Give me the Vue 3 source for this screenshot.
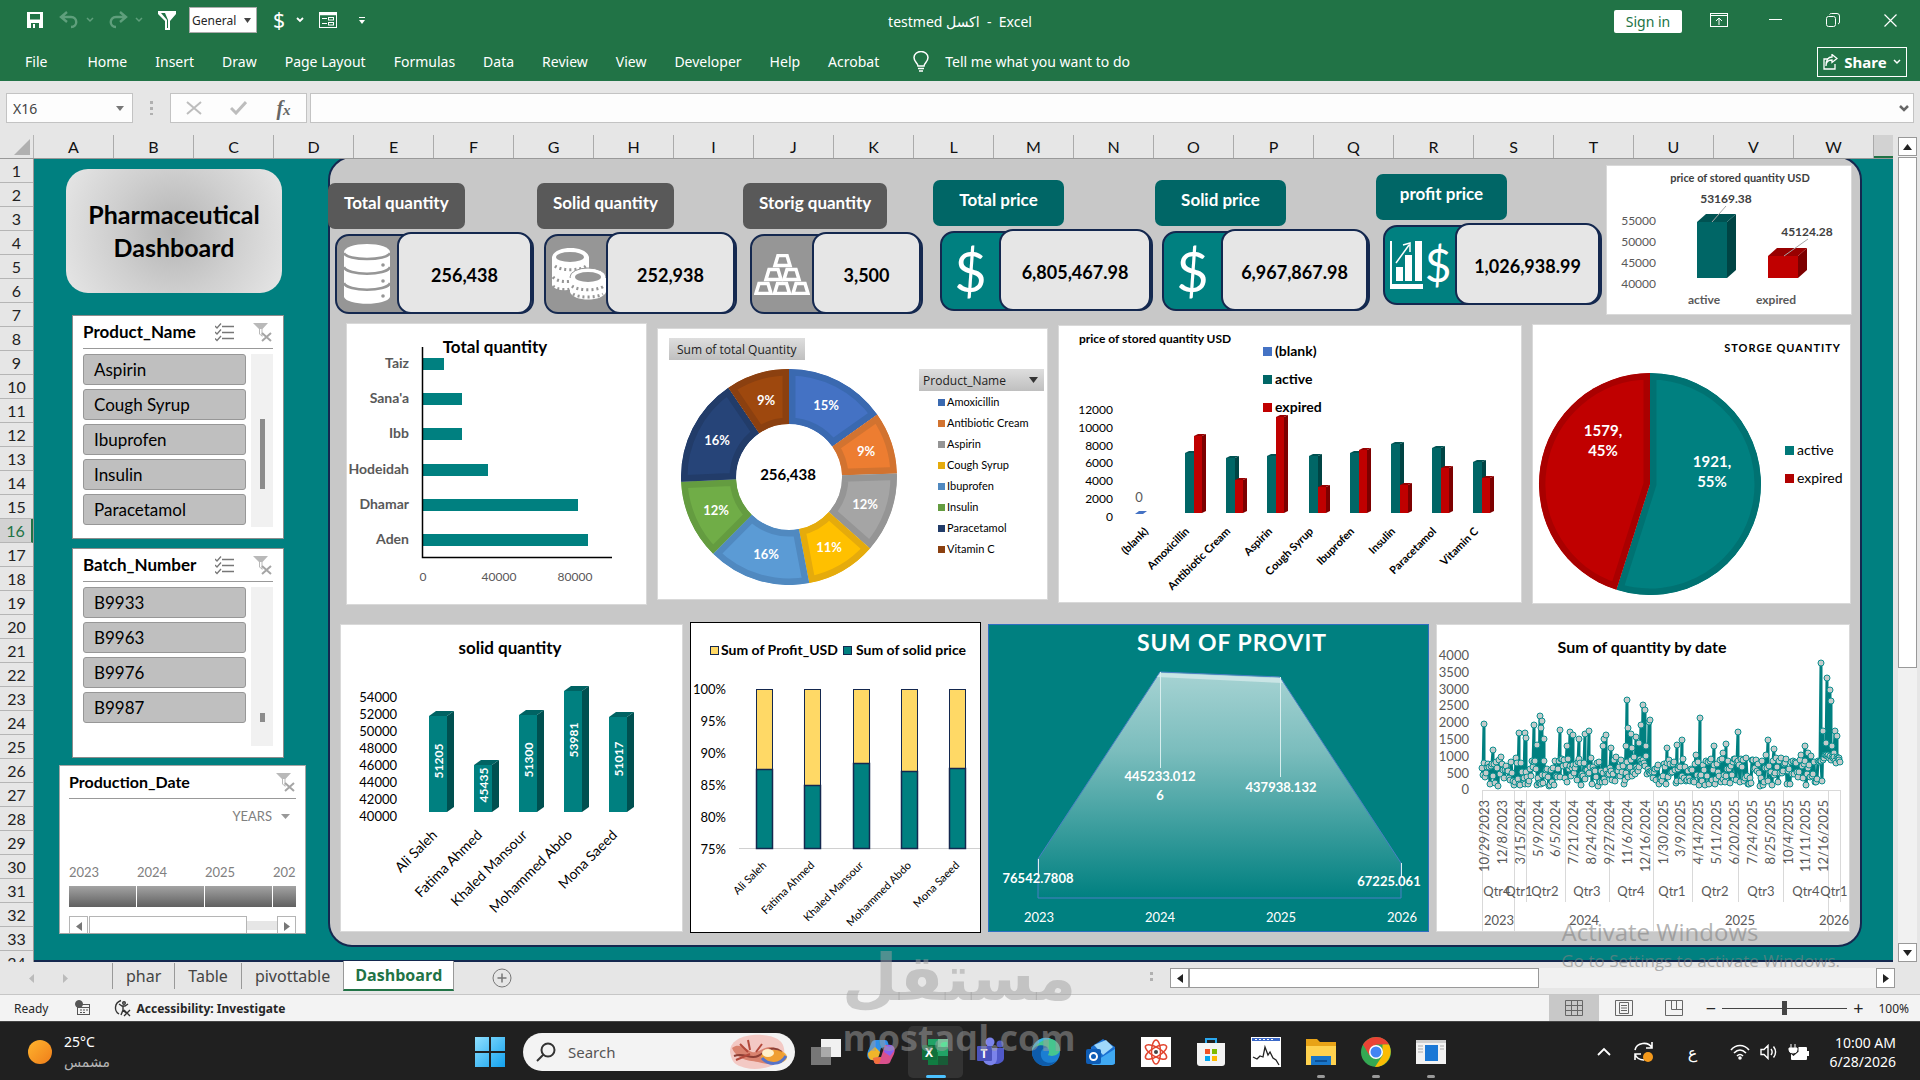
<script setup>
const ribbonTabs = ['Home', 'Insert', 'Draw', 'Page Layout', 'Formulas', 'Data', 'Review', 'View', 'Developer', 'Help', 'Acrobat']
const columns = 'ABCDEFGHIJKLMNOPQRSTUVW'.split('')
const sheets = ['phar', 'Table', 'pivottable', 'Dashboard']

const slicers = [
  { name: 'Product_Name', items: ['Aspirin', 'Cough Syrup', 'Ibuprofen', 'Insulin', 'Paracetamol'], cls: 'product' },
  { name: 'Batch_Number', items: ['B9933', 'B9963', 'B9976', 'B9987'], cls: 'batch' },
]

const kpis = [
  { label: 'Total quantity', value: '256,438', tone: 'gray', icon: 'database', slot: 209, box: 199 },
  { label: 'Solid quantity', value: '252,938', tone: 'gray', icon: 'coins', slot: 206, box: 193 },
  { label: 'Storig quantity', value: '3,500', tone: 'gray', icon: 'bars', slot: 190, box: 173 },
  { label: 'Total price', value: '6,805,467.98', tone: 'teal', icon: 'dollar', slot: 222, box: 213 },
  { label: 'Solid price', value: '6,967,867.98', tone: 'teal', icon: 'dollar', slot: 221, box: 208 },
  { label: 'profit price', value: '1,026,938.99', tone: 'teal high', icon: 'profit', slot: 230, box: 219 },
]

/* Faces of an upright 3-D column */
function column(x, top, base, w, dx, dy) {
  return {
    front: `${x},${top} ${x + w},${top} ${x + w},${base} ${x},${base}`,
    roof: `${x},${top} ${x + dx},${top - dy} ${x + w + dx},${top - dy} ${x + w},${top}`,
    side: `${x + w},${top} ${x + w + dx},${top - dy} ${x + w + dx},${base - dy} ${x + w},${base}`,
  }
}

const miniColumns = [
  { ...column(91, 57, 113, 30, 9, 8), tone: 'teal' },
  { ...column(162, 91, 113, 30, 9, 8), tone: 'red' },
]

const cities = [
  { name: 'Taiz', w: 22 },
  { name: "Sana'a", w: 40 },
  { name: 'Ibb', w: 40 },
  { name: 'Hodeidah', w: 66 },
  { name: 'Dhamar', w: 156 },
  { name: 'Aden', w: 166 },
]

function polar(cx, cy, r, pct) {
  const a = (pct / 100) * Math.PI * 2
  return `${(cx + r * Math.sin(a)).toFixed(1)} ${(cy - r * Math.cos(a)).toFixed(1)}`
}
function ring(cx, cy, r1, r0, from, to) {
  const big = to - from > 50 ? 1 : 0
  if (!r0) return `M${cx} ${cy}L${polar(cx, cy, r1, from)}A${r1} ${r1} 0 ${big} 1 ${polar(cx, cy, r1, to)}Z`
  return `M${polar(cx, cy, r1, from)}A${r1} ${r1} 0 ${big} 1 ${polar(cx, cy, r1, to)}L${polar(cx, cy, r0, to)}A${r0} ${r0} 0 ${big} 0 ${polar(cx, cy, r0, from)}Z`
}
const donut = [
  { name: 'Amoxicillin', pct: '15%', from: 0, to: 15.2, fill: '#4472c4', edge: '#3a69b0', x: 169, y: 82 },
  { name: 'Antibiotic Cream', pct: '9%', from: 15.2, to: 24.5, fill: '#ed7d31', edge: '#d27330', x: 209, y: 128 },
  { name: 'Aspirin', pct: '12%', from: 24.5, to: 36.5, fill: '#a5a5a5', edge: '#959595', x: 208, y: 181 },
  { name: 'Cough Syrup', pct: '11%', from: 36.5, to: 47, fill: '#ffc000', edge: '#e5ab0c', x: 172, y: 224 },
  { name: 'Ibuprofen', pct: '16%', from: 47, to: 62.4, fill: '#5b9bd5', edge: '#5089c0', x: 109, y: 231 },
  { name: 'Insulin', pct: '12%', from: 62.4, to: 74.3, fill: '#70ad47', edge: '#649c40', x: 59, y: 187 },
  { name: 'Paracetamol', pct: '16%', from: 74.3, to: 90.5, fill: '#264478', edge: '#223c69', x: 60, y: 117 },
  { name: 'Vitamin C', pct: '9%', from: 90.5, to: 100, fill: '#9e480e', edge: '#8b4010', x: 109, y: 77 },
].map((d) => ({ ...d, path: ring(132, 149, 108, 53, d.from, d.to) }))

const stored = [
  ['Amoxicillin', 128, 111], ['Antibiotic Cream', 133, 155], ['Aspirin', 131, 92], ['Cough Syrup', 131, 162],
  ['Ibuprofen', 128, 125], ['Insulin', 119, 160], ['Paracetamol', 123, 143], ['Vitamin C', 137, 153],
].map(([name, a, r], i) => {
  const x = 127 + Math.round(i * 41.2)
  return { name, x, active: column(x, a, 188, 9, 4, 2), expired: column(x + 9, r, 188, 8, 4, 2) }
})

const pie = [
  { fill: '#008080', edge: '#007272', path: ring(118, 160, 111, 0, 0, 54.9) },
  { fill: '#c00000', edge: '#a90000', path: ring(118, 160, 111, 0, 54.9, 100) },
]

const solid = [
  ['Ali Saleh', 51205, 92, 137], ['Fatima Ahmed', 45435, 141, 161], ['Khaled Mansour', 51300, 91, 136],
  ['Mohammed Abdo', 53981, 67, 116], ['Mona Saeed', 51017, 93, 135],
].map(([name, value, top, mid], i) => ({ name, value, mid, x: 89 + i * 45, ...column(89 + i * 45, top, 188, 18, 7, 5) }))

const stacked = [148, 164, 142, 150, 147].map((split, i) => ({ name: solid[i].name, split, x: 66 + Math.round(i * 48.3) }))

const dates = ['10/29/2023', '12/8/2023', '3/15/2024', '5/9/2024', '6/5/2024', '7/21/2024', '8/24/2024', '9/27/2024', '11/6/2024', '12/16/2024', '1/30/2025', '3/9/2025', '4/14/2025', '5/11/2025', '6/20/2025', '7/24/2025', '8/25/2025', '10/4/2025', '11/11/2025', '12/16/2025']
const quarters = [['Qtr4', 61], ['Qtr1', 83], ['Qtr2', 109], ['Qtr3', 151], ['Qtr4', 195], ['Qtr1', 236], ['Qtr2', 279], ['Qtr3', 325], ['Qtr4', 370], ['Qtr1', 398]]
const quarterLines = [46, 78, 90, 129, 173, 217, 256, 302, 347, 392, 404]
const yearLines = [46, 78, 217, 392]

/* Daily quantities: [x, quantity] for the high days, a steady spread between them */
const highs = [[48, 1970], [57, 1200], [83, 1700], [89, 1700], [90, 1550], [98, 1940], [101, 1340], [104, 2190], [105, 1830], [106, 2060], [108, 1500], [124, 1770], [131, 1300], [134, 1720], [137, 1620], [143, 1500], [149, 1670], [153, 1740], [167, 1320], [168, 1520], [170, 1640], [175, 1260], [190, 1300], [191, 2660], [192, 1830], [195, 1650], [196, 1240], [200, 1560], [203, 1400], [205, 1940], [207, 2510], [209, 2360], [210, 1300], [213, 2020], [214, 2090], [231, 1240], [241, 1350], [246, 1470], [264, 2150], [278, 1300], [287, 1110], [290, 1360], [302, 1710], [332, 1470], [338, 1220], [369, 1320], [372, 1090], [385, 3760], [387, 1740], [390, 1400], [391, 3310], [394, 2980], [395, 2630], [396, 1310], [398, 1110], [399, 1740], [401, 1590], [403, 940]]
const series = []
let seed = 11
let h = 0
for (let x = 46; x <= 404; x += 1) {
  if (h < highs.length && highs[h][0] <= x) {
    series.push(highs[h])
    h += 1
  }
  seed = (seed * 1103515245 + 12345) % 2147483648
  const r = seed / 2147483648
  const low = x > 386 ? 800 : x > 195 && x < 214 ? 400 : 120
  series.push([x, Math.round(low + r * (1080 - low) * (x % 5 === 0 ? 1 : 0.85))])
}
const points = series.map(([x, v]) => [x, Math.round(166 - v * 0.0337)])
const trend = points.map((p) => p.join(',')).join(' ')
</script>

<template>
  <div class="window">
    <header class="head">
      <div class="titlebar">
        <div class="qat">
          <button class="ico" aria-label="Save"><svg width="18" height="18" viewBox="0 0 18 18"><path d="M1 1h16v16H1z" fill="#fff" /><path d="M4 3h10v6H4zM5 12h8v5H5z" fill="#217346" /><path d="M7 13h2v4H7zM3.5 8.500h11v1.500h-11z" fill="#fff" /></svg></button>
          <div class="pair dim">
            <button class="ico" aria-label="Undo"><svg width="20" height="18" viewBox="0 0 20 18"><path d="M8 1L2 6l6 5M3 6h9c7 0 7 10 0 10" fill="none" stroke="currentColor" stroke-width="2.400" /></svg></button>
            <svg class="chev" width="12" height="8" viewBox="0 0 12 8"><path d="M3 2l3 3 3-3" fill="none" stroke="currentColor" stroke-width="1.500" /></svg>
          </div>
          <div class="pair dim">
            <button class="ico" aria-label="Redo"><svg width="20" height="18" viewBox="0 0 20 18"><path d="M12 1l6 5-6 5M17 6H8c-7 0-7 10 0 10" fill="none" stroke="currentColor" stroke-width="2.400" /></svg></button>
            <svg class="chev" width="12" height="8" viewBox="0 0 12 8"><path d="M3 2l3 3 3-3" fill="none" stroke="currentColor" stroke-width="1.500" /></svg>
          </div>
          <button class="ico" aria-label="Filter"><svg width="20" height="20" viewBox="0 0 20 20"><path d="M1 1h18v3l-6 7v9H8v-9L1 4z" fill="#fff" /><path d="M4 3h4l3 7v8h-1v-8z" fill="#217346" /></svg></button>
          <div class="format">
            <select aria-label="Number format"><option>General</option></select>
            <svg width="7" height="5" viewBox="0 0 7 5"><path d="M0 0h7L3.500 5z" fill="#444" /></svg>
          </div>
          <div class="pair">
            <button class="ico money" aria-label="Accounting format">$</button>
            <svg class="chev" width="12" height="8" viewBox="0 0 12 8"><path d="M3 2l3 3 3-3" fill="none" stroke="#fff" stroke-width="1.800" /></svg>
          </div>
          <button class="ico" aria-label="Form"><svg width="18" height="18" viewBox="0 0 18 18" fill="none" stroke="#fff"><rect x=".5" y="1.500" width="17" height="15" /><path d="M1 3h16" stroke-width="2.500" /><path d="M3 7.500h5M3 12.500h5" /><rect x="9.500" y="6.500" width="5" height="2.500" /><rect x="9.500" y="11.500" width="5" height="2.500" /></svg></button>
          <button class="ico" aria-label="Customize"><svg width="6" height="7" viewBox="0 0 6 7" fill="#fff"><path d="M0 0h6v1H0zM0 3h6L3 7z" /></svg></button>
        </div>
        <h1 class="doc">testmed اكسل&nbsp; - &nbsp;Excel</h1>
        <div class="winctl">
          <button class="signin">Sign in</button>
          <button class="wbtn" aria-label="Ribbon display"><svg width="18" height="14" viewBox="0 0 18 14" fill="none" stroke="#fff"><rect x=".5" y=".5" width="17" height="13" /><path d="M1 2.500h16M9 12V5M6 8l3-3 3 3" /></svg></button>
          <button class="wbtn" aria-label="Minimize"><svg width="13" height="14" viewBox="0 0 13 14"><path d="M0 6.500h13" stroke="#fff" /></svg></button>
          <button class="wbtn" aria-label="Restore"><svg width="14" height="14" viewBox="0 0 14 14" fill="none" stroke="#fff"><rect x=".5" y="3.500" width="9" height="10" rx="2" /><path d="M3.500 1.500q.5-1 2-1H11q2.500 0 2.500 2.500v6q0 1.500-1.500 2" /></svg></button>
          <button class="wbtn" aria-label="Close"><svg width="13" height="13" viewBox="0 0 13 13"><path d="M.5.500l12 12m0-12l-12 12" stroke="#fff" stroke-width="1.200" /></svg></button>
        </div>
      </div>
      <nav class="ribbon">
        <button class="rtab file">File</button>
        <button v-for="t in ribbonTabs" :key="t" class="rtab">{{ t }}</button>
        <button class="tell">
          <svg width="16" height="21" viewBox="0 0 16 21" fill="none" stroke="#fff" stroke-width="1.500"><path d="M5 15c0-3-4-4-4-8.500a7 6 0 0 1 14 0C15 11 11 12 11 15zM5 17.500h6M6 20h4" /></svg>
          Tell me what you want to do
        </button>
        <button class="share">
          <svg width="15" height="16" viewBox="0 0 15 16" fill="none" stroke="#fff" stroke-width="1.300"><path d="M5 5H1v10h11V10" /><path d="M3 12c0-5 3-6 6-6V8.500l5-4-5-4V3C5 3 3 7 3 12z" /></svg>
          Share
          <svg width="8" height="6" viewBox="0 0 8 6"><path d="M1 1l3 3 3-3" fill="none" stroke="#fff" stroke-width="1.500" /></svg>
        </button>
      </nav>
    </header>

    <div class="formula">
      <div class="namebox">
        <input value="X16" aria-label="Name box" />
        <svg width="8" height="5" viewBox="0 0 8 5"><path d="M0 0h8L4 5z" fill="#777" /></svg>
      </div>
      <span class="grip"></span>
      <div class="fxbox">
        <button aria-label="Cancel"><svg width="16" height="14" viewBox="0 0 16 14"><path d="M1 1l14 12M15 1L1 13" stroke="#bdbdbd" stroke-width="2" /></svg></button>
        <button aria-label="Enter"><svg width="17" height="14" viewBox="0 0 17 14"><path d="M1 7l5 5L16 1" fill="none" stroke="#bdbdbd" stroke-width="3" /></svg></button>
        <button class="fx" aria-label="Insert function">f<small>x</small></button>
      </div>
      <div class="fbar">
        <input value="" aria-label="Formula bar" />
        <svg width="10" height="7" viewBox="0 0 10 7"><path d="M1 1l4 4 4-4" fill="none" stroke="#666" stroke-width="2.500" /></svg>
      </div>
    </div>

    <div class="book">
      <div class="grid">
        <div class="cols">
          <div class="corner"><svg width="16" height="16" viewBox="0 0 16 16"><path d="M16 0v16H0z" fill="#b0b0b0" /></svg></div>
          <div v-for="c in columns" :key="c" class="col">{{ c }}</div>
          <div class="col active"></div>
        </div>
        <div class="sheet">
          <div class="rows">
            <div v-for="n in 34" :key="n" class="row" :class="{ active: n === 16 }">{{ n }}</div>
          </div>
          <main class="dash">
            <aside class="side">
              <h2 class="brand">Pharmaceutical<br />Dashboard</h2>
              <section v-for="s in slicers" :key="s.name" class="slicer" :class="s.cls">
                <header class="shead">
                  <h3>{{ s.name }}</h3>
                  <svg width="19" height="19" viewBox="0 0 19 19" fill="none" stroke="#777" stroke-width="1.300"><path d="M7 3.500h12M7 9.500h12M7 15.500h12M0 3l2 2 4-4.500M0 9l2 2 4-4.500M0 15.500l2 2L6 13" /></svg>
                  <svg width="19" height="19" viewBox="0 0 19 19"><path d="M0 0h15L9.500 6v8L6 11V6z" fill="#b9b9b9" /><path d="M7 6h1.500v6L7 11z" fill="#fff" /><path d="M9 10l9 8M18 10l-9 8" stroke="#a5a5a5" stroke-width="2" /></svg>
                </header>
                <div class="sbody">
                  <div class="items"><button v-for="i in s.items" :key="i">{{ i }}</button></div>
                  <div class="track"><span class="thumb"></span></div>
                </div>
              </section>
              <section class="timeline">
                <header class="shead">
                  <h3>Production_Date</h3>
                  <svg width="19" height="19" viewBox="0 0 19 19"><path d="M0 0h15L9.500 6v8L6 11V6z" fill="#b9b9b9" /><path d="M7 6h1.500v6L7 11z" fill="#fff" /><path d="M9 10l9 8M18 10l-9 8" stroke="#a5a5a5" stroke-width="2" /></svg>
                </header>
                <button class="level">YEARS <svg width="9" height="5" viewBox="0 0 9 5"><path d="M0 0h9L4.500 5z" fill="#999" /></svg></button>
                <div class="years">
                  <span>2023</span><span>2024</span><span>2025</span><span class="cut">2026</span>
                </div>
                <div class="blocks"><i></i><i></i><i></i><i class="cut"></i></div>
                <div class="tscroll">
                  <button aria-label="Earlier"><svg width="6" height="9" viewBox="0 0 6 9"><path d="M6 0v9L0 4.500z" fill="#777" /></svg></button>
                  <span></span><em></em>
                  <button aria-label="Later"><svg width="6" height="9" viewBox="0 0 6 9"><path d="M0 0v9l6-4.500z" fill="#777" /></svg></button>
                </div>
              </section>
            </aside>

            <div class="panel">
              <div class="line top">
                <section v-for="k in kpis" :key="k.label" class="kpi" :class="k.tone" :style="{ flexBasis: k.slot + 'px' }">
                  <h3>{{ k.label }}</h3>
                  <div class="kbox" :style="{ maxWidth: k.box + 'px' }">
                    <div class="kicon" :class="k.icon">
                      <svg v-if="k.icon === 'database'" width="46" height="60" viewBox="0 0 46 60">
                        <path d="M0 8v45c3 9 43 9 46 0V8z" fill="#fff" /><ellipse cx="23" cy="8" rx="23" ry="8" fill="#fff" />
                        <path d="M0 9c3 8 43 8 46 0M0 23c3 9 43 9 46 0M0 39c3 9 43 9 46 0" fill="none" stroke="#969696" stroke-width="2.500" />
                        <g fill="#969696"><circle cx="39" cy="21" r="1.800" /><circle cx="39" cy="37" r="1.800" /><circle cx="39" cy="52" r="1.800" /></g>
                      </svg>
                      <svg v-else-if="k.icon === 'coins'" width="54" height="52" viewBox="0 0 54 52">
                        <path d="M0 9v28c2 6 16 6 21 4h16V9C34-3 3-3 0 9z" fill="#fff" />
                        <ellipse cx="18" cy="9" rx="14" ry="5" fill="#969696" />
                        <path d="M3 18c6 5 25 5 31 0M1 29c4 5 14 5 19 4M1 38c4 4 12 4 17 3" fill="none" stroke="#969696" stroke-width="3" stroke-dasharray="2 3" />
                        <ellipse cx="36" cy="29" rx="18" ry="9" fill="#fff" stroke="#969696" stroke-width="1" />
                        <path d="M18 30v14c3 10 33 10 36 0V30z" fill="#fff" />
                        <ellipse cx="36" cy="29" rx="13" ry="5" fill="#969696" />
                        <path d="M20 38c6 5 26 5 32 0M21 46c6 4 24 4 30 0" fill="none" stroke="#969696" stroke-width="3" stroke-dasharray="2 3" />
                      </svg>
                      <svg v-else-if="k.icon === 'bars'" width="56" height="41" viewBox="0 0 56 41">
                        <path v-for="p in ['20 0', '11 14', '29 14', '1 28', '19.500 28', '38 28']" :key="p" :transform="`translate(${p})`" d="M4 1.500h9l3 10H1z" fill="#969696" stroke="#fff" stroke-width="3.500" />
                      </svg>
                      <template v-else-if="k.icon === 'dollar'">$</template>
                      <template v-else>
                        <svg width="34" height="48" viewBox="0 0 34 48"><path d="M1 0h2v43h31v5H1zM7 26h7v14H7zM16 14h7v26h-7zM26 0h7v40h-7z" fill="#fff" /><path d="M7 22l13-18M14 4l7-2v9" fill="none" stroke="#fff" stroke-width="1.500" /></svg>$
                      </template>
                    </div>
                    <div class="kval">{{ k.value }}</div>
                  </div>
                </section>

                <section class="card mini">
                  <svg viewBox="0 0 246 150" class="chart">
                    <text x="134" y="17" class="t11 b mid g4">price of stored quantity USD</text>
                    <text v-for="(v, i) in [55000, 50000, 45000, 40000]" :key="v" x="50" :y="60 + i * 21" class="t12 end g5">{{ v }}</text>
                    <g v-for="c in miniColumns" :key="c.tone" :class="c.tone"><polygon :points="c.side" class="side3" /><polygon :points="c.roof" class="roof3" /><polygon :points="c.front" class="front3" /></g>
                    <path d="M120 41L106 57M202 74L178 91" stroke="#a6a6a6" fill="none" />
                    <text x="120" y="38" class="t12 b mid g4">53169.38</text>
                    <text x="201" y="71" class="t12 b mid g4">45124.28</text>
                    <text x="98" y="139" class="t12 b mid g5">active</text>
                    <text x="170" y="139" class="t12 b mid g5">expired</text>
                  </svg>
                </section>
              </div>

              <div class="line middle">
                <section class="card city">
                  <svg viewBox="0 0 301 282" class="chart">
                    <rect v-for="(c, i) in cities" :key="c.name" x="76" :y="35 + Math.round(i * 35.2)" :width="c.w" height="12" fill="#008080" />
                    <path d="M76.500 24V234.500H266" fill="none" stroke="#000" stroke-width="1.500" />
                    <text v-for="(c, i) in cities" :key="c.name" x="63" :y="45 + Math.round(i * 35.2)" class="t14 b end g5">{{ c.name }}</text>
                    <text x="149" y="30" class="t17 b mid">Total quantity</text>
                    <text v-for="(v, i) in [0, 40000, 80000]" :key="v" :x="77 + i * 76" y="258" class="t12 mid g5">{{ v }}</text>
                  </svg>
                </section>

                <section class="card share-card">
                  <svg viewBox="0 0 391 272" class="chart">
                    <defs><clipPath v-for="(d, i) in donut" :id="'seg' + i" :key="i"><path :d="d.path" /></clipPath></defs>
                    <path v-for="(d, i) in donut" :key="d.name" :d="d.path" :fill="d.fill" :stroke="d.edge" stroke-width="13" :clip-path="`url(#seg${i})`" />
                    <text v-for="d in donut" :key="d.name" :x="d.x" :y="d.y" class="t13 b mid w">{{ d.pct }}</text>
                    <text x="131" y="152" class="t15 b mid">256,438</text>
                    <g v-for="(d, i) in donut" :key="d.name">
                      <rect x="281" :y="71 + i * 21" width="7" height="7" :fill="d.edge" />
                      <text x="290" :y="78 + i * 21" class="t11">{{ d.name }}</text>
                    </g>
                  </svg>
                  <button class="field sum">Sum of total Quantity</button>
                  <button class="field prod">Product_Name <svg width="9" height="6" viewBox="0 0 9 6"><path d="M0 0h9L4.500 6z" fill="#333" /></svg></button>
                </section>

                <section class="card stored">
                  <svg viewBox="0 0 464 278" class="chart">
                    <text x="21" y="18" class="t12 b">price of stored quantity USD</text>
                    <text v-for="(v, i) in [12000, 10000, 8000, 6000, 4000, 2000, 0]" :key="v" x="55" :y="89 + Math.round(i * 17.8)" class="t12 end">{{ v }}</text>
                    <path d="M77 189l4-3h8l-4 3z" fill="#4472c4" />
                    <text x="81" y="177" class="t13 mid g5">0</text>
                    <g v-for="s in stored" :key="s.name">
                      <g class="teal"><polygon :points="s.active.side" class="side3" /><polygon :points="s.active.roof" class="roof3" /><polygon :points="s.active.front" class="front3" /></g>
                      <g class="red"><polygon :points="s.expired.side" class="side3" /><polygon :points="s.expired.roof" class="roof3" /><polygon :points="s.expired.front" class="front3" /></g>
                    </g>
                    <g v-for="(l, i) in ['(blank)', 'active', 'expired']" :key="l">
                      <rect x="205" :y="22 + i * 28" width="9" height="9" :fill="['#4472c4', '#006666', '#c00000'][i]" />
                      <text x="217" :y="31 + i * 28" class="t14 b">{{ l }}</text>
                    </g>
                    <text v-for="(n, i) in ['(blank)', ...stored.map((s) => s.name)]" :key="n" :transform="`translate(${91 + Math.round(i * 41.2)} 207) rotate(-45)`" class="t11 b end">{{ n }}</text>
                  </svg>
                </section>

                <section class="card storge">
                  <svg viewBox="0 0 319 280" class="chart">
                    <text x="309" y="28" class="t11 b end track1">STORGE QUANTITY</text>
                    <defs><clipPath v-for="(p, i) in pie" :id="'pie' + i" :key="i"><path :d="p.path" /></clipPath></defs>
                    <path v-for="(p, i) in pie" :key="i" :d="p.path" :fill="p.fill" :stroke="p.edge" stroke-width="13" :clip-path="`url(#pie${i})`" />
                    <text x="71" y="112" class="t15 b mid w">1579,</text><text x="71" y="132" class="t15 b mid w">45%</text>
                    <text x="180" y="143" class="t15 b mid w">1921,</text><text x="180" y="163" class="t15 b mid w">55%</text>
                    <rect x="253" y="122" width="9" height="9" fill="#007878" /><text x="265" y="131" class="t14">active</text>
                    <rect x="253" y="150" width="9" height="9" fill="#b00000" /><text x="265" y="159" class="t14">expired</text>
                  </svg>
                </section>
              </div>

              <div class="line bottom">
                <section class="card solid">
                  <svg viewBox="0 0 343 308" class="chart">
                    <text x="170" y="30" class="t17 b mid">solid quantity</text>
                    <text v-for="(v, i) in [54000, 52000, 50000, 48000, 46000, 44000, 42000, 40000]" :key="v" x="57" :y="78 + i * 17" class="t13 end">{{ v }}</text>
                    <g v-for="s in solid" :key="s.name" class="tealb">
                      <polygon :points="s.side" class="side3" /><polygon :points="s.roof" class="roof3" /><polygon :points="s.front" class="front3" />
                      <text :transform="`translate(${s.x + 14} ${s.mid}) rotate(-90)`" class="t12 b mid w">{{ s.value }}</text>
                      <text :transform="`translate(${s.x + 9} 212) rotate(-45)`" class="t14 end">{{ s.name }}</text>
                    </g>
                  </svg>
                </section>

                <section class="card stack">
                  <svg viewBox="0 0 291 311" class="chart">
                    <rect x="20.500" y="24.500" width="8" height="8" fill="#ffd966" stroke="#14284f" /><text x="31" y="33" class="t14 b">Sum of Profit_USD</text>
                    <rect x="153.500" y="24.500" width="8" height="8" fill="#008080" stroke="#14284f" /><text x="166" y="33" class="t14 b">Sum of solid price</text>
                    <text v-for="(v, i) in [100, 95, 90, 85, 80, 75]" :key="v" x="36" :y="72 + i * 32" class="t13 end">{{ v }}%</text>
                    <path d="M49 226.500h241" stroke="#d0d0d0" />
                    <g v-for="b in stacked" :key="b.name">
                      <rect :x="b.x + 0.5" y="67.500" width="16" :height="b.split - 68" fill="#ffd966" stroke="#14284f" />
                      <rect :x="b.x + 0.5" :y="b.split - 0.5" width="16" :height="227 - b.split" fill="#008080" stroke="#14284f" stroke-width="1.500" />
                      <text :transform="`translate(${b.x + 11} 244) rotate(-45)`" class="t11 end">{{ b.name }}</text>
                    </g>
                  </svg>
                </section>

                <section class="card area">
                  <svg viewBox="0 0 441 308" class="chart">
                    <defs><linearGradient id="fade" x1="0" y1="0" x2="0" y2="1"><stop offset="0" stop-color="#a6d3d3" /><stop offset=".35" stop-color="#7bbdbd" /><stop offset="1" stop-color="#008080" /></linearGradient></defs>
                    <path d="M50 235L172 48l120 5 121 186v35H50z" fill="url(#fade)" stroke="#4a7fc4" />
                    <path d="M172 49l120 5 3 5-126-6z" fill="#c9e5e5" />
                    <path d="M172.500 48v96M292.500 53v100M50.500 235v17M413.500 239v14" stroke="#d8eeee" />
                    <text x="244" y="27" class="t23 b mid w track1">SUM OF PROVIT</text>
                    <g class="t13 b mid w">
                      <text x="172" y="157">445233.012</text><text x="172" y="176">6</text>
                      <text x="293" y="168">437938.132</text><text x="50" y="259">76542.7808</text><text x="401" y="262">67225.061</text>
                    </g>
                    <text v-for="(y, i) in [2023, 2024, 2025, 2026]" :key="y" :x="51 + i * 121" y="298" class="t13 mid w">{{ y }}</text>
                  </svg>
                </section>

                <section class="card bydate">
                  <svg viewBox="0 0 414 308" class="chart">
                    <text v-for="(v, i) in [4000, 3500, 3000, 2500, 2000, 1500, 1000, 500, 0]" :key="v" x="33" :y="36 + Math.round(i * 16.8)" class="t13 end g5">{{ v }}</text>
                    <path d="M46 166.500h358" stroke="#d9d9d9" />
                    <path v-for="x in quarterLines" :key="x" :d="`M${x}.5 166V278`" stroke="#d9d9d9" />
                    <path v-for="x in yearLines" :key="x" :d="`M${x}.5 278V307`" stroke="#d9d9d9" />
                    <polyline :points="trend" fill="none" stroke="#008080" stroke-width="3" stroke-linejoin="round" />
                    <circle v-for="(p, i) in points" :key="i" :cx="p[0]" :cy="p[1]" r="3" fill="#c5cbcb" stroke="#0a8f8f" />
                    <text x="206" y="29" class="t16 b mid">Sum of quantity by date</text>
                    <text v-for="(d, i) in dates" :key="d" :transform="`translate(${53 + Math.round(i * 17.86)} 176) rotate(-90)`" class="t13 end g5">{{ d }}</text>
                    <text v-for="q in quarters" :key="q[1]" :x="q[1]" y="272" class="t13 mid g5">{{ q[0] }}</text>
                    <text x="63" y="301" class="t13 mid g5">2023</text><text x="148" y="301" class="t13 mid g5">2024</text>
                    <text x="304" y="301" class="t13 mid g5">2025</text><text x="398" y="301" class="t13 mid g5">2026</text>
                  </svg>
                </section>
              </div>
            </div>
          </main>
        </div>
      </div>
      <div class="vscroll">
        <button aria-label="Scroll up"><svg width="9" height="6" viewBox="0 0 9 6"><path d="M0 6h9L4.500 0z" fill="#222" /></svg></button>
        <div class="vtrack"><span></span></div>
        <button aria-label="Scroll down"><svg width="9" height="6" viewBox="0 0 9 6"><path d="M0 0h9L4.500 6z" fill="#222" /></svg></button>
      </div>
    </div>

    <div class="tabs">
      <div class="navs">
        <svg width="6" height="9" viewBox="0 0 6 9"><path d="M5 0v9L0 4.500z" fill="#bbb" /></svg>
        <svg width="6" height="9" viewBox="0 0 6 9"><path d="M1 0v9l5-4.500z" fill="#bbb" /></svg>
      </div>
      <button v-for="s in sheets" :key="s" class="stab" :class="{ active: s === 'Dashboard' }">{{ s }}</button>
      <button class="plus" aria-label="New sheet"><svg width="20" height="20" viewBox="0 0 20 20" fill="none" stroke="#777"><circle cx="10" cy="10" r="9" /><path d="M10 5.500v9M5.500 10h9" stroke-width="1.500" /></svg></button>
      <div class="hscroll">
        <span class="grip small"></span>
        <button aria-label="Scroll left"><svg width="6" height="9" viewBox="0 0 6 9"><path d="M6 0v9L0 4.500z" fill="#222" /></svg></button>
        <div class="htrack"><span></span></div>
        <button aria-label="Scroll right"><svg width="6" height="9" viewBox="0 0 6 9"><path d="M0 0v9l6-4.500z" fill="#222" /></svg></button>
      </div>
    </div>

    <footer class="status">
      <span>Ready</span>
      <svg width="16" height="16" viewBox="0 0 16 16" fill="none" stroke="#555"><rect x="2.500" y="4.500" width="12" height="10" /><path d="M3 7.500h11M5 10h2M8 10h2M11 10h2M5 12.500h2M8 12.500h2" /><circle cx="4" cy="4" r="3.500" fill="#555" /></svg>
      <button class="acc">
        <svg width="18" height="18" viewBox="0 0 18 18" fill="none" stroke="#333" stroke-width="1.400"><path d="M7 1.500C0 4 0 12 5 15M5 5l3 2h3l3-2M9 7v4l-2 5M9 11l3 3" /><circle cx="10" cy="4" r="1.300" /><path d="M10 11l6 6M16 11l-6 6" /></svg>
        Accessibility: Investigate
      </button>
      <div class="views">
        <button class="on" aria-label="Normal"><svg width="18" height="16" viewBox="0 0 18 16" fill="none" stroke="#666"><path d="M.5.500h17v15H.5zM0 5.500h18M0 10.500h18M6.500 0v16M12.500 0v16" /></svg></button>
        <button aria-label="Page layout"><svg width="18" height="16" viewBox="0 0 18 16" fill="none" stroke="#666"><path d="M.5.500h17v15H.5zM4.500 2.500h9v11h-9zM6 5.500h6M6 8h6M6 10.500h6" /></svg></button>
        <button aria-label="Page break"><svg width="18" height="16" viewBox="0 0 18 16" fill="none" stroke="#666"><path d="M.5.500h17v15H.5zM6.500 0v9.500H17M11.500 0v9" /></svg></button>
      </div>
      <div class="zoom">
        <span>−</span><input type="range" min="0" max="100" value="50" aria-label="Zoom" /><span>+</span><b>100%</b>
      </div>
    </footer>

    <div class="taskbar">
      <div class="weather">
        <svg width="26" height="26" viewBox="0 0 26 26"><defs><linearGradient id="sun" x1="0" y1="0" x2="1" y2="1"><stop offset="0" stop-color="#ffb52e" /><stop offset="1" stop-color="#ef7d1a" /></linearGradient></defs><circle cx="13" cy="13" r="12" fill="url(#sun)" /></svg>
        <div><b>25°C</b><span>مشمس</span></div>
      </div>
      <div class="apps">
        <button class="app" aria-label="Start"><svg width="30" height="30" viewBox="0 0 30 30"><defs><linearGradient id="win" x1="0" y1="0" x2="1" y2="1"><stop offset="0" stop-color="#8fe0ff" /><stop offset="1" stop-color="#12a1ee" /></linearGradient></defs><path d="M0 0h14v14H0zM16 0h14v14H16zM0 16h14v14H0zM16 16h14v14H16z" fill="url(#win)" /></svg></button>
        <label class="search">
          <svg width="20" height="20" viewBox="0 0 20 20" fill="none" stroke="#333" stroke-width="2"><circle cx="12" cy="8" r="6.500" /><path d="M7.500 12.500L1 19" /></svg>
          <input placeholder="Search" aria-label="Search" />
          <svg width="64" height="36" viewBox="0 0 64 36"><path d="M2 18C2 4 20 0 34 1s24 6 22 20c-5 12-26 16-38 13S4 28 2 18z" fill="#f3c9c4" /><path d="M4 14c8-6 14 2 20 4s14-8 22-4 12 6 12 10-14 8-24 5S10 28 4 14z" fill="#d9836f" /><path d="M6 22c10-4 16 4 24 0s14-12 24-4" fill="none" stroke="#8d3f35" stroke-width="2" /><path d="M12 10l8 8M20 6l2 10M8 26l14-6M34 10l-6 8" stroke="#b3493b" stroke-width="2" /><ellipse cx="46" cy="23" rx="13" ry="7" fill="#f5a623" opacity=".8" /><path d="M34 24c6 7 18 8 24-2" fill="none" stroke="#5673c8" stroke-width="3" /><ellipse cx="40" cy="19" rx="6" ry="4" fill="#fff0c9" /></svg>
        </label>
        <button class="app" aria-label="Task view"><svg width="32" height="28" viewBox="0 0 32 28"><path d="M11 1h20v18H11z" fill="#f1f1f1" /><path d="M1 9h20v18H1z" fill="#777" /><path d="M11 9h10v10H11z" fill="#aaa" /></svg></button>
        <button class="app" aria-label="Copilot"><svg width="28" height="26" viewBox="0 0 28 26"><path d="M9 1h9c3 0 3 3 4 6l-8 2-4 12H6c-5 0-7-3-5-9L4 5c1-3 2-4 5-4z" fill="#2f8fe8" /><path d="M1 14c0 5 2 8 7 7 3-1 4-4 5-8L8 8z" fill="#f0b52a" /><path d="M19 25h-9c-3 0-3-3-4-6l8-1 4-12h4c5 0 7 3 5 9l-3 6c-1 3-2 4-5 4z" fill="#d9508d" /><path d="M27 12c0-5-2-7-6-6-3 1-3 3-4 7l6 4z" fill="#8a5ff0" /><path d="M10 25c-3 0-3-3-4-6l8-1-1 5c-1 2-2 2-3 2z" fill="#f2703c" /></svg></button>
        <button class="app current" aria-label="Excel"><svg width="28" height="28" viewBox="0 0 28 28"><path d="M6 1h20v26H6z" fill="#21a366" /><path d="M16 1h10v8H16z" fill="#5fdf9a" /><path d="M6 14h10v13H6z" fill="#107c41" /><path d="M16 18h10v9H16z" fill="#185c37" /><rect y="7" width="15" height="15" rx="1" fill="#0f703b" /><text x="7" y="19" class="mid b w t12">X</text></svg></button>
        <button class="app" aria-label="Teams"><svg width="28" height="30" viewBox="0 0 28 30"><circle cx="13" cy="5" r="4.500" fill="#7b83eb" /><circle cx="23" cy="7" r="3.500" fill="#5059c9" /><path d="M7 11h20v10c0 4-5 6-8 6H12z" fill="#5059c9" /><path d="M6 11h14v10c0 10-13 9-14 1z" fill="#7b83eb" /><rect y="9" width="15" height="15" rx="1" fill="#4b53bc" /><text x="7" y="21" class="mid b w t12">T</text></svg></button>
        <button class="app" aria-label="Edge"><svg width="30" height="30" viewBox="0 0 30 30"><circle cx="15" cy="15" r="14" fill="#1b7ed3" /><path d="M1 14C2-2 28-3 29 12c0 7-9 8-12 6 3-5-1-9-6-8-5 0-9 2-10 4z" fill="#45c58e" /><path d="M1 14c2-6 12-8 16-3-5-1-8 3-7 8 1 6 8 9 15 5-5 8-24 7-24-10z" fill="#0e5cab" /><path d="M1 14C2 4 12-2 20 2 12 2 4 7 1 14z" fill="#35b8e8" /></svg></button>
        <button class="app" aria-label="Outlook"><svg width="30" height="30" viewBox="0 0 30 30"><path d="M5 10L17 2l12 8v17H5z" fill="#1a6fd0" /><path d="M8 8l12-5 7 7-10 8z" fill="#9fd8fb" /><path d="M5 27L29 12v13c0 2-1 3-3 3H7z" fill="#40a9f2" /><rect y="12" width="15" height="15" rx="2" fill="#0f5db5" /><circle cx="7.500" cy="19.500" r="3.500" fill="none" stroke="#fff" stroke-width="2" /></svg></button>
        <button class="app" aria-label="Atom"><svg width="30" height="30" viewBox="0 0 30 30"><path d="M0 0h30v30H0z" fill="#fff" /><g fill="none" stroke="#e2452f" stroke-width="1.500"><ellipse cx="15" cy="15" rx="4.500" ry="12" /><ellipse cx="15" cy="15" rx="4.500" ry="12" transform="rotate(60 15 15)" /><ellipse cx="15" cy="15" rx="4.500" ry="12" transform="rotate(-60 15 15)" /></g><circle cx="15" cy="15" r="2" fill="#444" /></svg></button>
        <button class="app" aria-label="Store"><svg width="28" height="30" viewBox="0 0 28 30"><path d="M9 7V2h10v5" fill="none" stroke="#2aa7ee" stroke-width="2" /><path d="M0 6h28v20q0 3-3 3H3q-3 0-3-3z" fill="#f3f3f3" /><path d="M8 12h5v5H8z" fill="#f25022" /><path d="M15 12h5v5h-5z" fill="#7fba00" /><path d="M8 19h5v5H8z" fill="#00a4ef" /><path d="M15 19h5v5h-5z" fill="#ffb900" /></svg></button>
        <button class="app" aria-label="Monitor"><svg width="30" height="30" viewBox="0 0 30 30"><path d="M0 0h30v30H0z" fill="#fff" /><path d="M1 1h28v3H1z" fill="#3a68c8" /><path d="M4 2.500h2m2 0h2m2 0h2m2 0h2m2 0h2" stroke="#fff" /><path d="M2 20l4 2 3-3 3 1 2-10 3 8 2-3 3 6 3 2 3 5" fill="none" stroke="#222" stroke-width="1.300" /></svg></button>
        <button class="app run" aria-label="Files"><svg width="30" height="28" viewBox="0 0 30 28"><path d="M0 1h11l3 3h16v23H0z" fill="#e8a317" /><path d="M0 8h30v19H0z" fill="#ffd24f" /><path d="M5 18h20v9H5z" fill="#1976c9" /><path d="M9 22h12v2H9z" fill="#0c4f94" /></svg></button>
        <button class="app run" aria-label="Chrome"><svg width="30" height="30" viewBox="0 0 30 30"><circle cx="15" cy="15" r="15" fill="#34a853" /><path d="M2 7.500C9-3 23-2 28 7.500H15L8.500 18.500z" fill="#ea4335" /><path d="M28 7.500c5 10-2 22.500-14 22.500l7.500-11.500V7.500z" fill="#fbbc05" /><circle cx="15" cy="15" r="7" fill="#fff" /><circle cx="15" cy="15" r="5.500" fill="#4285f4" /></svg></button>
        <button class="app run" aria-label="Document"><svg width="30" height="24" viewBox="0 0 30 24"><path d="M0 0h30v24H0z" fill="#f2f2f2" /><path d="M0 0h30v3H0z" fill="#cfcfcf" /><path d="M9 5h13v16H9z" fill="#1a78d6" /><path d="M2 6h5M2 9h5M2 12h5M24 6h4M24 9h4" stroke="#aaa" /></svg></button>
      </div>
      <div class="tray">
        <svg width="14" height="9" viewBox="0 0 14 9"><path d="M1 8l6-6 6 6" fill="none" stroke="#fff" stroke-width="1.800" /></svg>
        <svg class="sync" width="24" height="24" viewBox="0 0 24 24" fill="none"><path d="M3 10A9 8 0 0 1 20 8M20 2v6h-6M12 20A9 8 0 0 1 3 14M3 20v-6h6" stroke="#fff" stroke-width="1.600" /><circle cx="16" cy="17" r="5" fill="#f59a1c" /></svg>
        <span class="lang">ع</span>
        <svg width="20" height="16" viewBox="0 0 20 16" fill="none" stroke="#fff" stroke-width="1.600"><path d="M1 6C6 0 14 0 19 6M4 9c4-4 8-4 12 0M7 12c2-2 4-2 6 0" /><circle cx="10" cy="14" r="1" fill="#fff" /></svg>
        <svg width="18" height="16" viewBox="0 0 18 16" fill="none" stroke="#fff" stroke-width="1.400"><path d="M1 5.500h3l4-4v13l-4-4H1zM11 5c1.500 2 1.500 4 0 6M13.500 2.500c3 4 3 7 0 11" /></svg>
        <svg width="22" height="18" viewBox="0 0 22 18"><path d="M4 5h14v11H4z" fill="#fff" stroke="#fff" stroke-width="2" stroke-linejoin="round" /><path d="M20 8v5" stroke="#fff" stroke-width="2" /><path d="M6 0v5M2 4h7v4L5.500 11 2 8z" fill="none" stroke="#202020" stroke-width="3" /><path d="M3 1v4M7 1v4M1 5h8v2q0 3-4 3T1 7z" fill="#fff" stroke="#fff" /></svg>
        <div class="clock"><span>10:00 AM</span><span>6/28/2026</span></div>
      </div>
    </div>

    <div class="activate"><b>Activate Windows</b><span>Go to Settings to activate Windows.</span></div>
    <div class="mark"><b>مستقل</b><span>mostaql.com</span></div>
  </div>
</template>

<style>
html, body { background: #e6e6e6; }
</style>

<style scoped>
* { box-sizing: border-box; }
.window { position: relative; display: flex; flex-direction: column; min-height: 100vh; overflow: hidden; font-family: "Noto Sans", "Open Sans", "DejaVu Sans", sans-serif; font-size: 14px; color: #262626; }
button { border: 0; background: none; padding: 0; margin: 0; font: inherit; color: inherit; display: flex; align-items: center; justify-content: center; white-space: nowrap; }
input, select { font: inherit; color: inherit; border: 0; margin: 0; padding: 0; background: none; outline: 0; min-width: 0; }
h1, h2, h3 { margin: 0; font-weight: 700; }
svg { display: block; flex-shrink: 0; }

.head { background: #217346; color: #fff; }
.titlebar { display: grid; grid-template-columns: 1fr auto 1fr; height: 40px; align-items: center; }
.qat { display: flex; align-items: center; gap: 10px; padding-left: 23px; }
.ico { width: 24px; height: 26px; }
.pair { display: flex; align-items: center; gap: 3px; }
.dim { color: #5f9f7c; }
.money { font-size: 21px; }
.format { display: flex; align-items: center; width: 68px; height: 26px; background: #fff; border: 1px solid #ababab; padding: 0 5px 0 2px; color: #262626; font-size: 12px; }
.format select { flex: 1; appearance: none; }
.doc { font-size: 14px; line-height: 20px; font-weight: 400; padding-top: 4px; }
.winctl { display: flex; justify-content: flex-end; align-items: center; padding-right: 13px; }
.signin { width: 68px; height: 23px; background: #fff; color: #217346; border-radius: 2px; margin: 2px 8px 0 0; }
.wbtn { width: 57px; height: 30px; }
.wbtn:last-child { width: 34px; margin-left: 12px; }
.ribbon { display: flex; height: 41px; align-items: center; padding: 2px 13px 0 11px; }
.rtab { padding: 0 14px; height: 36px; }
.rtab.file { margin-right: 12px; }
.tell { gap: 16px; margin-left: 20px; }
.share { margin-left: auto; height: 30px; width: 90px; border: 1px solid #fff; font-weight: 700; gap: 6px; font-size: 15px; }

.formula { display: flex; height: 54px; align-items: center; padding: 0 6px; background: #e6e6e6; }
.namebox { display: flex; align-items: center; width: 127px; height: 30px; background: #fdfdfd; border: 1px solid #c3c3c3; padding: 0 8px 0 6px; color: #444; }
.namebox input { flex: 1; }
.grip { width: 3px; height: 14px; margin: 0 17px; background: repeating-linear-gradient(#b0b0b0 0 3px, transparent 3px 6px); }
.fxbox { display: flex; width: 137px; height: 30px; background: #fdfdfd; border: 1px solid #c3c3c3; }
.fxbox button { flex: 1; }
.fx { font: italic bold 20px "Liberation Serif", serif; color: #666; }
.fx small { font-size: 15px; padding-top: 5px; }
.fbar { display: flex; flex: 1; align-items: center; height: 30px; margin-left: 3px; background: #fdfdfd; border: 1px solid #c3c3c3; padding-right: 4px; }
.fbar input { flex: 1; height: 28px; }

.book { display: flex; flex: 1; background: #e6e6e6; }
.grid { flex: 1; display: flex; flex-direction: column; min-width: 0; }
.cols { display: flex; height: 24px; border-bottom: 1px solid #999; font: 16px/24px Lato, sans-serif; color: #111; }
.corner { flex: 0 0 34px; display: flex; justify-content: flex-end; align-items: flex-end; padding: 0 3px 3px 0; border-right: 1px solid #b5b5b5; }
.col { flex: 1 1 80px; text-align: center; border-right: 1px solid #ababab; }
.col.active { flex: 0 0 19px; background: #d2d2d2; border-right: 0; border-bottom: 2px solid #217346; }
.sheet { display: flex; flex: 1; }
.rows { flex: 0 0 34px; contain: size; overflow: hidden; border-right: 1px solid #999; font: 16px/24px Lato, sans-serif; color: #222; }
.row { height: 24px; border-bottom: 1px solid #b5b5b5; text-align: center; }
.row.active { background: #d2d2d2; color: #217346; border-right: 2px solid #217346; }

.dash { flex: 1; display: flex; min-width: 0; background: #008080; border-bottom: 2px solid #14284f; font-family: Lato, "Noto Sans", sans-serif; color: #000; padding-right: 31px; overflow: hidden; }
.side { flex: 0 1 294px; padding: 10px 22px 0 25px; min-width: 0; }
.brand { margin: 0 24px 0 7px; height: 124px; display: flex; align-items: center; justify-content: center; text-align: center; font-size: 25px; line-height: 33px; border-radius: 22px; background: radial-gradient(circle, #b4b4b4, #cfcfcf 50%, #e4e4e4 95%); }
.slicer { margin: 0 22px 9px 13px; background: #fff; border: 1px solid #8c8c8c; padding: 0 10px; }
.slicer.product { margin-top: 22px; height: 224px; }
.slicer.batch { height: 210px; margin-bottom: 7px; }
.shead { display: flex; align-items: center; gap: 19px; height: 33px; border-bottom: 1px solid #999; padding-right: 4px; }
.shead h3 { font-size: 17px; line-height: 24px; margin-right: auto; }
.sbody { display: flex; gap: 5px; padding-top: 5px; }
.items { flex: 1; display: flex; flex-direction: column; gap: 4px; }
.items button { height: 31px; justify-content: flex-start; padding-left: 10px; font-size: 17px; background: #bfbfbf; border: 1px solid #979797; border-radius: 3px; }
.track { flex: 0 0 22px; height: 173px; background: #f1f1f1; display: flex; justify-content: center; padding-top: 65px; }
.thumb { width: 5px; height: 70px; background: #8c8c8c; }
.batch .track { height: 159px; padding-top: 126px; }
.batch .thumb { height: 9px; }
.timeline { background: #fff; border: 1px solid #a5a5a5; height: 169px; padding: 0 9px; overflow: hidden; }
.timeline .shead { padding-right: 1px; }
.timeline .shead h3 { font-size: 16px; }
.level { margin: 6px 6px 0 auto; font-size: 13px; line-height: 22px; color: #808080; gap: 9px; }
.years { display: flex; margin-top: 34px; font-size: 13px; line-height: 22px; color: #808080; }
.years span, .blocks i { flex: 0 0 68px; }
.years .cut, .blocks .cut { flex: 1 1 0; min-width: 0; overflow: hidden; }
.years .cut { flex: 0 0 23px; }
.blocks { display: flex; gap: 1px; margin-top: 3px; }
.blocks i { height: 21px; flex-basis: 67px; background: linear-gradient(#a3a3a3, #606060); }
.tscroll { display: flex; margin-top: 9px; height: 24px; align-items: stretch; }
.tscroll button { width: 19px; height: 24px; padding-bottom: 4px; border: 1px solid #b5b5b5; }
.tscroll span { flex: 1; margin-left: 1px; border: 1px solid #b5b5b5; }
.tscroll em { width: 30px; height: 9px; margin-top: 5px; background: #e6e6e6; }

.panel { flex: 1; min-width: 0; align-self: flex-start; margin-top: -3px; background: #c8c8c8; border: 2px solid #14284f; border-radius: 24px; padding-bottom: 12px; margin-bottom: 13px; }
.line { display: flex; align-items: center; }
.line.top { align-items: flex-start; margin: 0 8px 8px -2px; }
.line.middle { gap: 10px; margin: 0 9px 17px 16px; }
.line.bottom { gap: 7px; margin: 0 10px; }
.card { flex: 1 1 0; min-width: 0; background: #fff; position: relative; box-shadow: inset 0 0 0 1px #d9d9d9; }
.mini { flex-basis: 246px; margin-top: 7px; }
.city { flex-basis: 301px; }
.share-card { flex-basis: 391px; }
.stored { flex-basis: 464px; }
.storge { flex-basis: 319px; }
.solid { flex-basis: 343px; }
.stack { flex-basis: 291px; box-shadow: inset 0 0 0 1px #000; }
.area { flex-basis: 441px; background: #008080; box-shadow: inset 0 0 0 1px #2f6fc0; }
.bydate { flex-basis: 414px; }

.kpi { flex: 1 1 0; min-width: 0; padding: 25px 0 0 0; }
.kpi.teal { padding-top: 22px; }
.kpi.high { padding-top: 16px; }
.kpi h3 { display: inline-flex; align-items: center; justify-content: center; height: 46px; min-width: 131px; padding: 0 16px 6px; border-radius: 7px; background: #595959; color: #fff; font-size: 17px; line-height: 20px; vertical-align: top; white-space: nowrap; }
.kpi.teal h3 { background: #006666; }
.kbox { display: flex; margin: 5px 0 0 7px; height: 80px; border: 2px solid #14284f; border-radius: 14px; background: #969696; }
.teal .kbox { background: #008080; }
.kicon { flex: 0 0 60px; display: flex; align-items: center; justify-content: center; color: #fff; font-size: 56px; line-height: 76px; }
.kicon.coins { justify-content: flex-end; }
.kicon.dollar { flex-basis: 57px; }
.kicon.profit { flex-basis: 70px; font-size: 46px; gap: 2px; }
.kval { flex: 1; margin: -4px 0 -2px; padding-top: 3px; border: 2px solid #14284f; border-radius: 14px; background: #e6e6e6; display: flex; align-items: center; justify-content: center; font-size: 18px; font-weight: 700; min-width: 0; }

.chart { width: 100%; height: auto; fill: #000; }
.chart text { font-family: Lato, sans-serif; }
.t11 { font-size: 11px; } .t12 { font-size: 12px; } .t13 { font-size: 13px; } .t14 { font-size: 14px; } .t15 { font-size: 15px; } .t16 { font-size: 16px; } .t17 { font-size: 17px; } .t23 { font-size: 23px; }
.b { font-weight: 700; }
.mid { text-anchor: middle; }
.end { text-anchor: end; }
.w { fill: #fff; }
.g4 { fill: #404040; }
.g5 { fill: #595959; }
.track1 { letter-spacing: 1px; }
.teal .front3 { fill: #006666; } .teal .roof3 { fill: #005252; } .teal .side3 { fill: #004444; }
.red .front3 { fill: #c00000; } .red .roof3 { fill: #980000; } .red .side3 { fill: #7d0000; }
.tealb .front3 { fill: #008080; } .tealb .roof3 { fill: #006363; } .tealb .side3 { fill: #005050; }
.field { position: absolute; height: 22px; background: linear-gradient(#dedede, #bfbfbf); font: 12px "Open Sans", sans-serif; color: #222; }
.field.sum { left: 3%; top: 10px; width: 136px; }
.field.prod { right: 1%; top: 41px; width: 125px; padding: 0 6px 0 4px; justify-content: space-between; }

.vscroll { flex: 0 0 27px; display: flex; flex-direction: column; padding: 2px 3px 0 5px; }
.vscroll button { height: 19px; background: #fff; border: 1px solid #999; }
.vtrack { flex: 1; background: #f1f1f1; padding-top: 1px; }
.vtrack span { display: block; height: 65%; background: #fff; border: 1px solid #999; }

.tabs { display: flex; align-items: center; height: 33px; background: #e6e6e6; border-bottom: 1px solid #c6c6c6; font-size: 15px; color: #444; }
.navs { display: flex; gap: 27px; width: 112px; padding-left: 29px; }
.stab { height: 26px; margin-bottom: 4px; padding: 0 13px; border-left: 1px solid #999; font-size: 16px; }
.stab.active { height: 30px; background: #fff; color: #217346; font: bold 16px "Open Sans", sans-serif; padding: 0 11px; border-right: 1px solid #999; border-bottom: 2px solid #217346; }
.plus { margin-left: 38px; }
.hscroll { flex: 0 1 747px; display: flex; align-items: center; margin-left: auto; margin-right: 25px; height: 20px; }
.hscroll button { width: 19px; height: 20px; background: #fff; border: 1px solid #999; }
.grip.small { margin: 0 17px 0 2px; height: 12px; }
.htrack { flex: 1; height: 20px; background: #f1f1f1; }
.htrack span { display: block; width: 51%; height: 20px; background: #fff; border: 1px solid #999; }

.status { display: flex; align-items: center; height: 26px; background: #f3f3f3; font-size: 12px; padding: 0 11px 0 14px; }
.status > svg { margin: 0 23px 0 27px; }
.acc { gap: 4px; font-weight: 700; }
.views { display: flex; margin-left: auto; height: 26px; }
.views button { width: 50px; }
.views .on { background: #c8c8c8; }
.zoom { display: flex; align-items: center; gap: 6px; font-size: 18px; margin-left: 7px; }
.zoom b { font-size: 12px; font-weight: 400; margin-left: 9px; }
.zoom input { appearance: none; width: 125px; height: 14px; background: linear-gradient(#444, #444) center / 100% 1px no-repeat; }
.zoom input::-webkit-slider-thumb { appearance: none; width: 5px; height: 14px; background: #444; }

.taskbar { display: grid; grid-template-columns: 1fr auto 1fr; align-items: center; height: 60px; background: #202020; border-top: 1px solid #444; color: #fff; }
.weather { display: flex; gap: 11px; align-items: center; padding-left: 27px; font-size: 14px; line-height: 20px; }
.weather b, .weather span { display: block; font-weight: 400; }
.weather span { color: #b5b5b5; }
.apps { display: flex; align-items: center; }
.app { width: 55px; height: 52px; position: relative; }
.app.current { background: #333; border-radius: 5px; }
.app.current::after, .app.run::after { content: ""; position: absolute; bottom: 0; left: 50%; width: 8px; height: 3px; margin-left: -4px; border-radius: 2px; background: #999; }
.app.current::after { width: 20px; margin-left: -10px; background: #4cc2ff; }
.search { display: flex; align-items: center; width: 272px; height: 38px; margin: 0 3px 0 6px; padding: 0 3px 0 13px; border-radius: 19px; background: #f3f3f3; gap: 12px; font-size: 15px; }
.search input { flex: 1; }
.search input::placeholder { color: #555; opacity: 1; }
.tray { display: flex; justify-content: flex-end; align-items: center; padding-right: 24px; gap: 10px; }
.sync { margin-left: 11px; }
.lang { width: 38px; text-align: center; margin: 0 8px; font-size: 16px; }
.clock { display: flex; flex-direction: column; text-align: right; font-size: 14px; line-height: 19px; margin-left: 10px; }

.activate { position: absolute; right: 80px; bottom: 107px; display: flex; flex-direction: column; color: rgba(130, 130, 130, 0.6); font-family: "Open Sans", sans-serif; pointer-events: none; }
.activate b { font-size: 24px; line-height: 32px; font-weight: 400; }
.activate span { font-size: 17px; line-height: 26px; }
.mark { position: absolute; left: 50%; bottom: 23px; width: 240px; margin-left: -121px; text-align: center; color: rgba(160, 160, 160, 0.5); pointer-events: none; }
.mark b { display: block; font: bold 64px/80px "DejaVu Sans", sans-serif; }
.mark span { display: block; font: bold 36px/40px "Open Sans", sans-serif; }
</style>
